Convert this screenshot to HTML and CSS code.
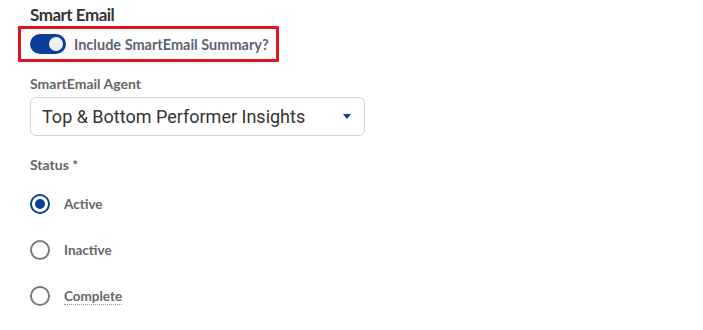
FILE: index.html
```html
<html>
<head>
<link rel="stylesheet" href="styles.css">
</head>
<body>
<div class="form">
	<h3 class="section-title">Smart Email</h3>
	<div class="highlight">
		<label class="switch">
			<span class="track"><span class="knob"></span></span>
			<span class="switch-label">Include SmartEmail Summary?</span>
		</label>
	</div>

	<div class="field">
		<div class="field-label">SmartEmail Agent</div>
		<div class="select">
			<span class="select-value">Top &amp; Bottom Performer Insights</span>
			<span class="caret"></span>
		</div>
	</div>

	<div class="field status">
		<div class="field-label">Status *</div>
		<div class="radios">
			<label class="radio checked"><span class="dot"></span><span>Active</span></label>
			<label class="radio"><span class="dot"></span><span>Inactive</span></label>
			<label class="radio"><span class="dot"></span><span class="hint">Complete</span></label>
		</div>
	</div>
</div>
</body>
</html>
```

FILE: styles.css
```css
body {
	margin: 0;
	background: #fff;
	font-family: 'Lato', sans-serif;
	color: #333;
}

.form {
	padding: 5px 0 0 30px;
}

.section-title {
	margin: 0;
	font-size: 17px;
	line-height: 20px;
	font-weight: 700;
	letter-spacing: -0.5px;
	color: #333;
}

.highlight {
	display: inline-flex;
	align-items: center;
	margin: 1px 0 0 -12px;
	padding: 5px 7px 5px 9px;
	border: 3px solid #e3151c;
}

.switch {
	display: flex;
	align-items: center;
	gap: 8px;
}

.track {
	position: relative;
	width: 36px;
	height: 20px;
	border-radius: 10px;
	background: #0b3f99;
}

.knob {
	position: absolute;
	top: 3px;
	right: 3px;
	width: 14px;
	height: 14px;
	border-radius: 50%;
	background: #f1f1f1;
}

.switch-label {
	font-size: 14.5px;
	font-weight: 700;
	color: #5b6472;
}

.field {
	margin-top: 14px;
}

.field-label {
	font-size: 14px;
	font-weight: 700;
	color: #666;
	line-height: 16px;
}

.select {
	display: flex;
	align-items: center;
	justify-content: space-between;
	box-sizing: border-box;
	width: 335px;
	height: 39px;
	margin-top: 5px;
	padding: 0 13px 0 11px;
	border: 1px solid #d0d0d0;
	border-radius: 6px;
}

.select-value {
	font-family: 'Roboto', sans-serif;
	font-size: 18px;
	color: #333;
}

.caret {
	width: 0;
	height: 0;
	border-left: 4px solid transparent;
	border-right: 4px solid transparent;
	border-top: 5px solid #0b3f99;
}

.status {
	margin-top: 21px;
}

.radios {
	display: flex;
	flex-direction: column;
	gap: 26px;
	margin-top: 21px;
}

.radio {
	display: flex;
	align-items: center;
	gap: 14px;
	height: 20px;
	font-size: 13.5px;
	font-weight: 700;
	color: #666;
}

.dot {
	position: relative;
	box-sizing: border-box;
	width: 20px;
	height: 20px;
	border: 2px solid #757a80;
	border-radius: 50%;
}

.radio.checked .dot {
	border-color: #0b3f99;
}

.radio.checked .dot::after {
	content: '';
	position: absolute;
	top: 3px;
	left: 3px;
	width: 10px;
	height: 10px;
	border-radius: 50%;
	background: #0b3f99;
}

.hint {
	border-bottom: 1px dotted #999;
}
```
